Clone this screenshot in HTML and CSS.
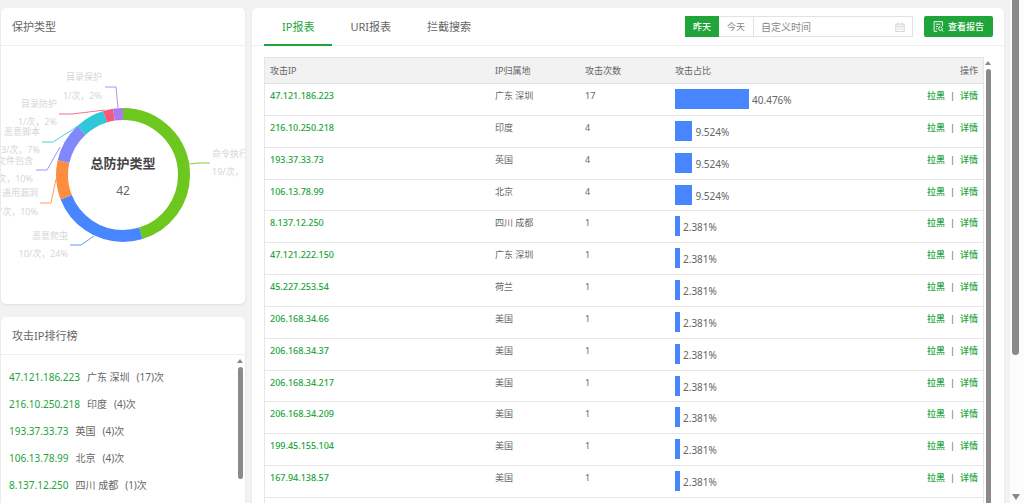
FILE: index.html
```html
<!DOCTYPE html>
<html lang="zh-CN">
<head>
<meta charset="utf-8">
<title>攻击报表</title>
<link rel="stylesheet" href="styles.css">
</head>
<body>
<div class="page">
  <aside class="side">
    <section class="panel">
      <h2 class="panel-title">保护类型</h2>
      <svg class="donut" viewBox="0 0 244 258" role="img" aria-label="总防护类型 42">
        <g class="ring" transform="rotate(-90 122 129)">
          <circle cx="122" cy="129" r="61" pathLength="42" stroke="#6ec71e" stroke-dasharray="19 23"/>
          <circle cx="122" cy="129" r="61" pathLength="42" stroke="#4886ff" stroke-dasharray="10 32" stroke-dashoffset="-19"/>
          <circle cx="122" cy="129" r="61" pathLength="42" stroke="#fd8d40" stroke-dasharray="4 38" stroke-dashoffset="-29"/>
          <circle cx="122" cy="129" r="61" pathLength="42" stroke="#8088fc" stroke-dasharray="4 38" stroke-dashoffset="-33"/>
          <circle cx="122" cy="129" r="61" pathLength="42" stroke="#30c8d8" stroke-dasharray="3 39" stroke-dashoffset="-37"/>
          <circle cx="122" cy="129" r="61" pathLength="42" stroke="#f55a78" stroke-dasharray="1 41" stroke-dashoffset="-40"/>
          <circle cx="122" cy="129" r="61" pathLength="42" stroke="#a97bf0" stroke-dasharray="1 41" stroke-dashoffset="-41"/>
        </g>
        <g class="leaders">
          <path stroke="#a97bf0" d="M104 41H115L117 62"/>
          <path stroke="#f55a78" d="M58 68H71L104 64"/>
          <path stroke="#30c8d8" d="M41 96H52L77 80"/>
          <path stroke="#8088fc" d="M35 124H46L59 101"/>
          <path stroke="#fd8d40" d="M39 157H50L55 133"/>
          <path stroke="#4886ff" d="M69 199H80L93 190"/>
          <path stroke="#6ec71e" d="M188 118L198 117H209"/>
        </g>
        <g class="names">
          <text x="101" y="34">目录保护</text><text x="101" y="53">1/次，2%</text>
          <text x="56" y="61">目录防护</text><text x="56" y="79">1/次，2%</text>
          <text x="39" y="89">恶意脚本</text><text x="39" y="107">3/次，7%</text>
          <text x="32" y="118">文件包含</text><text x="32" y="136">4/次，10%</text>
          <text x="37" y="150">通用漏洞</text><text x="37" y="169">4/次，10%</text>
          <text x="67" y="193">恶意爬虫</text><text x="67" y="211">10/次，24%</text>
          <text class="right" x="211" y="111">命令执行</text><text class="right" x="211" y="129">19/次，</text>
        </g>
        <text class="total-name" x="122" y="122">总防护类型</text>
        <text class="total" x="122" y="149">42</text>
      </svg>
    </section>
    <section class="panel rank">
      <h2 class="panel-title">攻击IP排行榜</h2>
      <div class="rank-body">
        <ul class="rank-list">
          <li><a href="#">47.121.186.223</a><span>广东 深圳</span><span>(17)次</span></li>
          <li><a href="#">216.10.250.218</a><span>印度</span><span>(4)次</span></li>
          <li><a href="#">193.37.33.73</a><span>英国</span><span>(4)次</span></li>
          <li><a href="#">106.13.78.99</a><span>北京</span><span>(4)次</span></li>
          <li><a href="#">8.137.12.250</a><span>四川 成都</span><span>(1)次</span></li>
        </ul>
        <div class="scroll"><i class="arrow"></i><i class="thumb short"></i></div>
      </div>
    </section>
  </aside>

  <main class="panel report">
    <header class="toolbar">
      <nav class="tabs">
        <button class="tab active">IP报表</button>
        <button class="tab">URI报表</button>
        <button class="tab">拦截搜索</button>
      </nav>
      <div class="range">
        <button class="day on">昨天</button>
        <button class="day">今天</button>
        <label class="date">
          <input type="text" placeholder="自定义时间" aria-label="自定义时间">
          <svg viewBox="0 0 12 12" width="10" height="10"><path d="M1 2.500H11V11.500H1ZM1 5H11M3.500 .5V3M8.500 .5V3M3 7H4.500M5.500 7H7M8 7H9.500M3 9H4.500M5.500 9H7M8 9H9.500"/></svg>
        </label>
      </div>
      <button class="view">
        <svg viewBox="0 0 12 12" width="11" height="11"><path d="M4.500 11.300H1.200V.7H10.300V5.500M3.200 3.500H8M3.200 6H5.500M3.200 8.500H4.500"/><circle cx="8" cy="8.300" r="2"/><path d="M9.500 9.800L11.300 11.500"/></svg>
        查看报告
      </button>
    </header>
    <div class="table-wrap">
      <table class="attacks">
        <colgroup><col class="c-ip"><col class="c-mid"><col class="c-mid"><col><col class="c-act"></colgroup>
        <thead><tr><th>攻击IP</th><th>IP归属地</th><th>攻击次数</th><th>攻击占比</th><th class="act">操作</th></tr></thead>
        <tbody>
          <tr><td><a href="#">47.121.186.223</a></td><td>广东 深圳</td><td>17</td><td><div class="share"><i style="width:40.476%"></i>40.476%</div></td><td class="act"><a href="#">拉黑</a><span>|</span><a href="#">详情</a></td></tr>
          <tr><td><a href="#">216.10.250.218</a></td><td>印度</td><td>4</td><td><div class="share"><i style="width:9.524%"></i>9.524%</div></td><td class="act"><a href="#">拉黑</a><span>|</span><a href="#">详情</a></td></tr>
          <tr><td><a href="#">193.37.33.73</a></td><td>英国</td><td>4</td><td><div class="share"><i style="width:9.524%"></i>9.524%</div></td><td class="act"><a href="#">拉黑</a><span>|</span><a href="#">详情</a></td></tr>
          <tr><td><a href="#">106.13.78.99</a></td><td>北京</td><td>4</td><td><div class="share"><i style="width:9.524%"></i>9.524%</div></td><td class="act"><a href="#">拉黑</a><span>|</span><a href="#">详情</a></td></tr>
          <tr><td><a href="#">8.137.12.250</a></td><td>四川 成都</td><td>1</td><td><div class="share"><i style="width:2.381%"></i>2.381%</div></td><td class="act"><a href="#">拉黑</a><span>|</span><a href="#">详情</a></td></tr>
          <tr><td><a href="#">47.121.222.150</a></td><td>广东 深圳</td><td>1</td><td><div class="share"><i style="width:2.381%"></i>2.381%</div></td><td class="act"><a href="#">拉黑</a><span>|</span><a href="#">详情</a></td></tr>
          <tr><td><a href="#">45.227.253.54</a></td><td>荷兰</td><td>1</td><td><div class="share"><i style="width:2.381%"></i>2.381%</div></td><td class="act"><a href="#">拉黑</a><span>|</span><a href="#">详情</a></td></tr>
          <tr><td><a href="#">206.168.34.66</a></td><td>美国</td><td>1</td><td><div class="share"><i style="width:2.381%"></i>2.381%</div></td><td class="act"><a href="#">拉黑</a><span>|</span><a href="#">详情</a></td></tr>
          <tr><td><a href="#">206.168.34.37</a></td><td>美国</td><td>1</td><td><div class="share"><i style="width:2.381%"></i>2.381%</div></td><td class="act"><a href="#">拉黑</a><span>|</span><a href="#">详情</a></td></tr>
          <tr><td><a href="#">206.168.34.217</a></td><td>美国</td><td>1</td><td><div class="share"><i style="width:2.381%"></i>2.381%</div></td><td class="act"><a href="#">拉黑</a><span>|</span><a href="#">详情</a></td></tr>
          <tr><td><a href="#">206.168.34.209</a></td><td>美国</td><td>1</td><td><div class="share"><i style="width:2.381%"></i>2.381%</div></td><td class="act"><a href="#">拉黑</a><span>|</span><a href="#">详情</a></td></tr>
          <tr><td><a href="#">199.45.155.104</a></td><td>美国</td><td>1</td><td><div class="share"><i style="width:2.381%"></i>2.381%</div></td><td class="act"><a href="#">拉黑</a><span>|</span><a href="#">详情</a></td></tr>
          <tr><td><a href="#">167.94.138.57</a></td><td>美国</td><td>1</td><td><div class="share"><i style="width:2.381%"></i>2.381%</div></td><td class="act"><a href="#">拉黑</a><span>|</span><a href="#">详情</a></td></tr>
          <tr><td></td><td></td><td></td><td><div class="share"><i style="width:2.381%"></i></div></td><td></td></tr>
        </tbody>
      </table>
      <div class="scroll"><i class="arrow"></i><i class="thumb"></i></div>
    </div>
  </main>
  <div class="page-scroll"><i class="page-thumb"></i><i class="page-arrow"></i></div>
</div>
</body>
</html>
```

FILE: styles.css
```css
* { box-sizing: border-box; }
body {
  margin: 0;
  background: #f2f2f2;
  color: #666;
  font-family: "Noto Sans", "Noto Sans CJK SC", sans-serif;
  font-size: 9px;
}
a { color: #20a53a; text-decoration: none; }
button, input { font: inherit; color: inherit; margin: 0; padding: 0; border: 0; background: none; }
button { cursor: pointer; }

.page { display: flex; height: 100vh; overflow: hidden; padding-left: 1px; }
.panel { background: #fff; border-radius: 5px; box-shadow: 0 1px 2px #ddd; }
.side { flex: 0 0 244px; margin: 8px 7px 0 0; display: flex; flex-direction: column; gap: 13px; }
.panel-title {
  margin: 0;
  padding-left: 11px;
  height: 38px;
  line-height: 38px;
  border-bottom: 1px solid #eee;
  font-size: 11px;
  font-weight: 400;
}

.donut { display: block; width: 100%; overflow: hidden; }
.ring circle { fill: none; stroke-width: 12; }
.leaders path { fill: none; stroke-width: 1; opacity: .85; }
.names text { font-size: 9px; fill: #d6d6d6; text-anchor: end; }
.names .right { text-anchor: start; }
.total-name { font-size: 13px; font-weight: 700; fill: #444; text-anchor: middle; }
.total { font-size: 12px; fill: #666; text-anchor: middle; }

.rank { flex: 1; border-radius: 5px 5px 0 0; }
.rank-body { display: flex; justify-content: space-between; padding: 4px 2px 0 8px; }
.rank-list { list-style: none; margin: 0; padding: 4px 0 0; font-size: 10px; }
.rank-list li { display: flex; gap: 7px; height: 27px; line-height: 28px; }

.scroll { flex: 0 0 5px; display: flex; flex-direction: column; align-items: center; gap: 4px; }
.arrow { border: 3px solid transparent; border-top: 0; border-bottom: 4px solid #888; }
.thumb { flex: 1; width: 5px; border-radius: 3px; background: #8a8a8a; }
.short { flex: 0 0 112px; }

.report { flex: 1; min-width: 0; margin: 8px 6px 0 0; border-radius: 5px 5px 0 0; }
.toolbar { display: flex; align-items: center; height: 38px; padding: 0 11px 0 12px; border-bottom: 1px solid #eee; }
.tabs { display: flex; flex: 1; height: 38px; }
.tab { padding: 0 18px; font-size: 11px; border-bottom: 1px solid transparent; white-space: nowrap; }
.active { color: #20a53a; border-bottom: 2px solid #20a53a; }
.range { display: flex; }
.day { width: 34px; height: 21px; border: 1px solid #e2e2e2; border-width: 1px 0; color: #888; }
.on { background: #20a53a; border-color: #20a53a; color: #fff; font-weight: 500; }
.date { display: flex; align-items: center; width: 160px; height: 21px; padding: 0 7px; border: 1px solid #e2e2e2; }
.date input { flex: 1; min-width: 0; font-size: 10px; outline: 0; }
.date input::placeholder { color: #888; }
.date svg { fill: none; stroke: #ccc; }
.view {
  display: flex;
  align-items: center;
  justify-content: center;
  gap: 4px;
  width: 69px;
  height: 21px;
  margin-left: 11px;
  border-radius: 2px;
  background: #20a53a;
  color: #fff;
  font-weight: 500;
  white-space: nowrap;
}
.view svg { fill: none; stroke: #fff; }

.table-wrap { display: flex; gap: 1px; padding: 11px 13px 0 12px; }
.table-wrap .scroll { padding-top: 4px; }
.attacks {
  flex: 1;
  height: 474px;
  table-layout: fixed;
  border-spacing: 0;
  border: 1px solid #e6e6e6;
}
.attacks td a { font-weight: 500; }
.c-ip { width: 225px; }
.c-mid { width: 90px; }
.c-act { width: 70px; }
.attacks th {
  height: 26px;
  padding: 0 5px;
  background: #f2f2f2;
  border-bottom: 1px solid #e2e2e2;
  font-weight: 400;
  text-align: left;
}
.attacks td { padding: 5px 5px 0; vertical-align: top; line-height: 14px; border-bottom: 1px solid #e6e6e6; }
.attacks .act { text-align: right; white-space: nowrap; }
.act span { padding: 0 5px; }
.share { display: flex; gap: 3px; width: 183px; font-size: 10px; line-height: 23px; height: 20px; }
.share i { flex: none; min-width: 5px; height: 20px; background: #4886ff; }

.page-scroll { flex: 0 0 14px; display: flex; flex-direction: column; justify-content: space-between; align-items: center; padding: 0 3px 3px 0; background: #fcfcfc; }
.page-thumb { width: 7px; height: 71%; border-radius: 0 0 4px 4px; background: #8a8a8a; }
.page-arrow { border: 4px solid transparent; border-bottom: 0; border-top: 6px solid #888; }
```
